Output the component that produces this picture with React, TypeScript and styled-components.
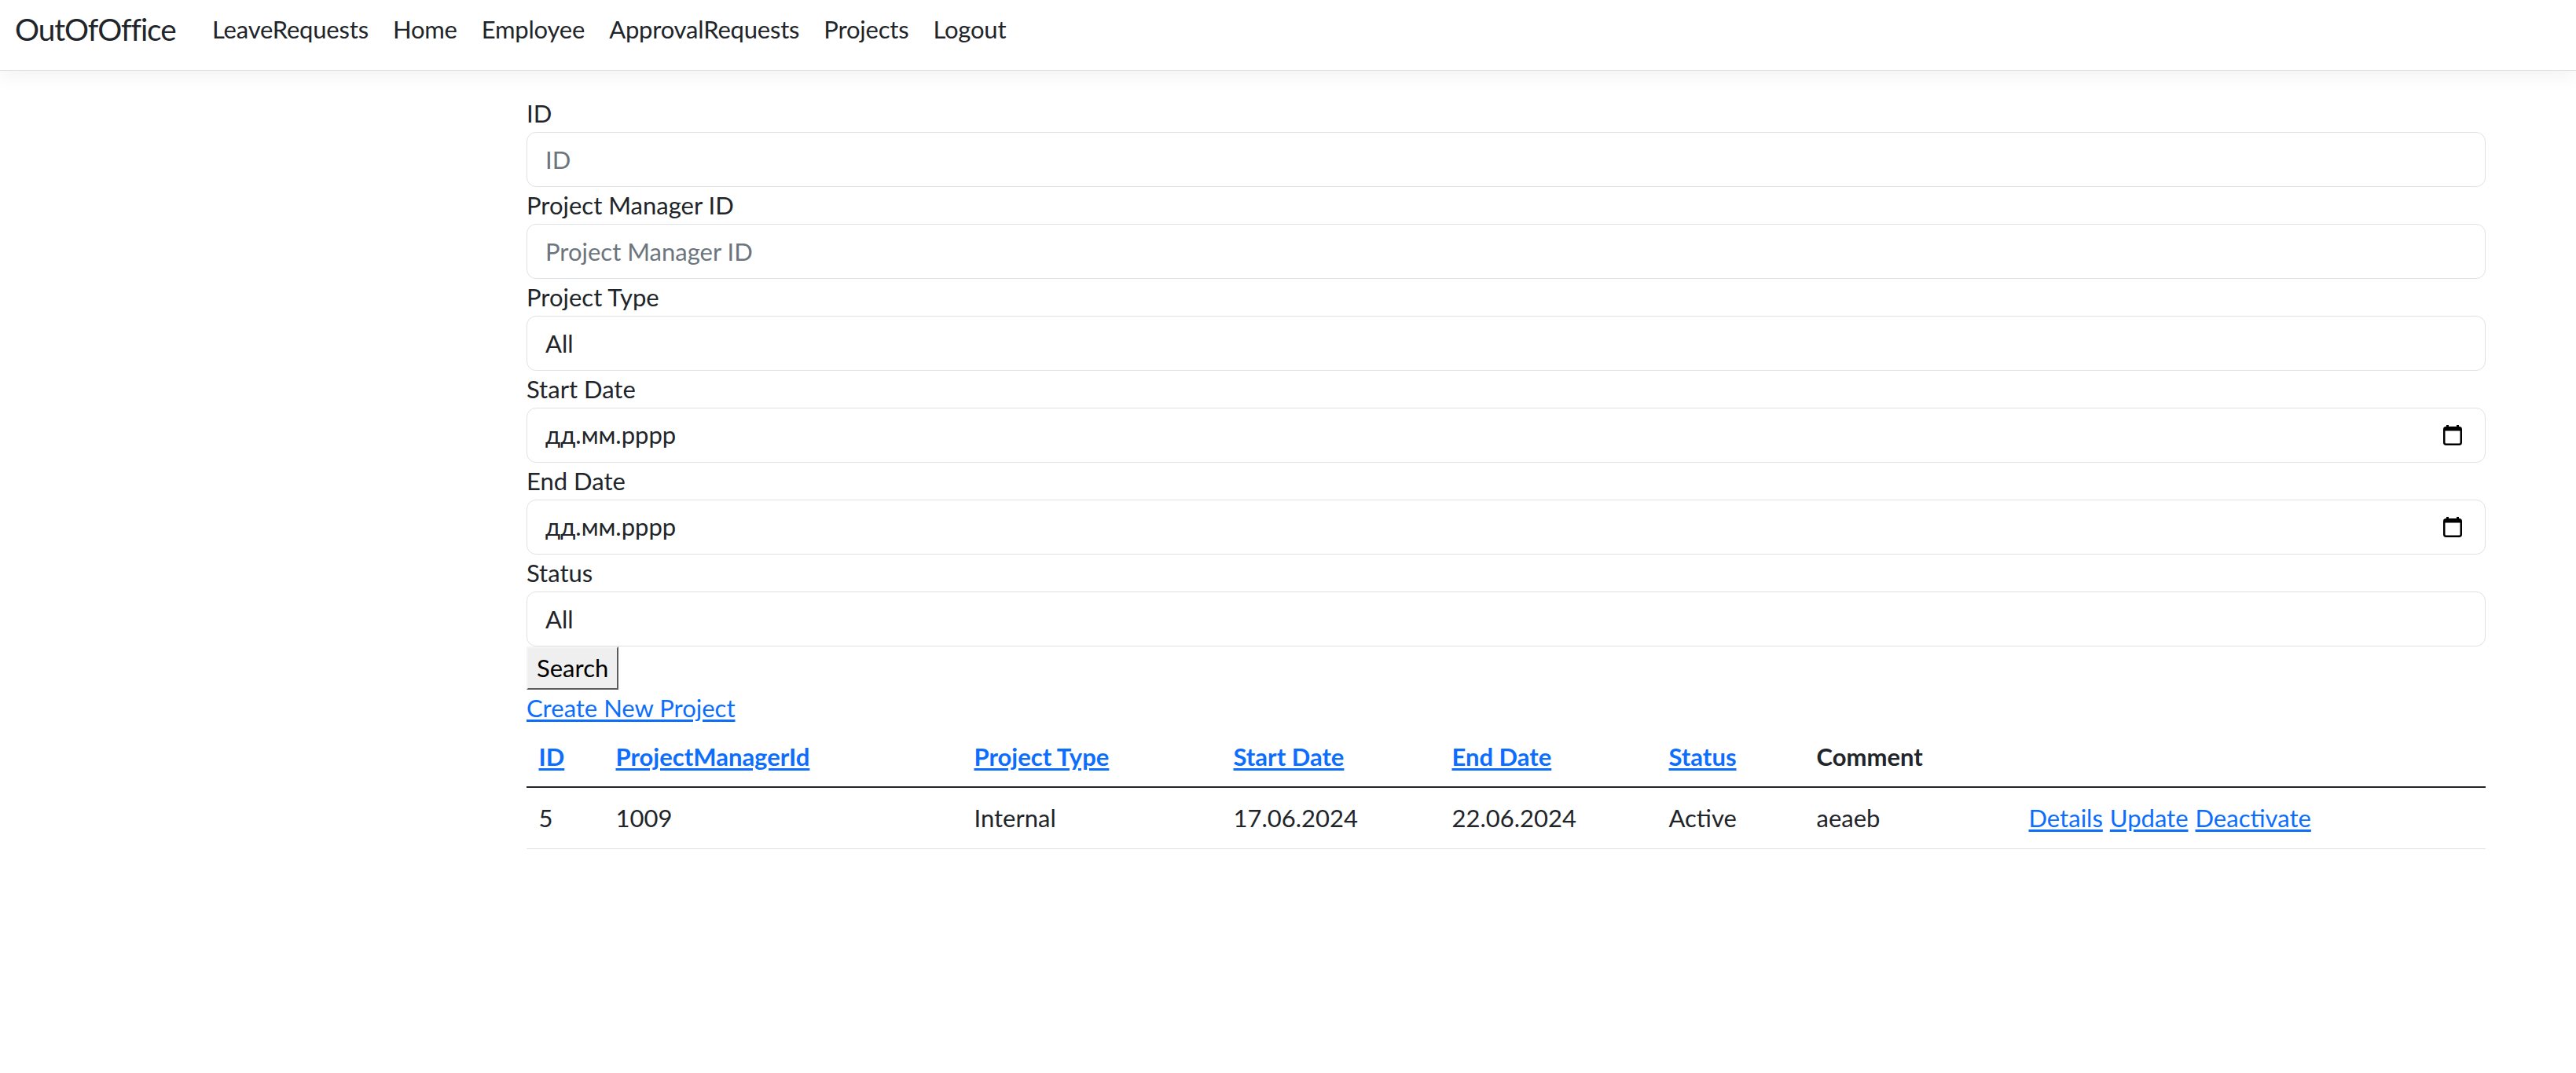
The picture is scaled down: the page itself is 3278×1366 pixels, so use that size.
import React from "react";
import styled, { createGlobalStyle } from "styled-components";

const GlobalStyle = createGlobalStyle`
  * { box-sizing: border-box; }
  html, body { margin: 0; padding: 0; background: #fff; }
  body {
    font-family: Lato, "Liberation Sans", sans-serif;
    font-size: 31px;
    line-height: 1.5;
    color: #212529;
  }
`;

const Header = styled.header`
  height: 90px;
  display: flex;
  align-items: center;
  padding: 0 20px 14px 19px;
  border-bottom: 1px solid #dcdcdc;
  box-shadow: 0 8px 23px rgba(0, 0, 0, 0.05);
  margin-bottom: 31px;
`;

const Brand = styled.a`
  font-size: 38.75px;
  letter-spacing: -1.1px;
  color: #212529;
  text-decoration: none;
  margin-right: 31px;
  line-height: 1.5;
`;

const NavList = styled.nav`
  display: flex;
  align-items: center;
`;

const NavLink = styled.a`
  padding: 0 15.5px;
  color: #212529;
  letter-spacing: -0.2px;
  text-decoration: none;
  white-space: nowrap;
`;

const Main = styled.main`
  padding: 0 115px 40px 670px;
`;

const Form = styled.form`
  display: flex;
  flex-direction: column;
  align-items: flex-start;
`;

const Field = styled.div`
  width: 100%;
  display: flex;
  flex-direction: column;
`;

const Label = styled.label`
  display: block;
  line-height: 46.5px;
`;

const controlBase = `
  width: 100%;
  height: 70.5px;
  padding: 0 23px;
  font-family: inherit;
  font-size: 31px;
  color: #212529;
  background: #fff;
  border: 1px solid #dee2e6;
  border-radius: 12px;
  outline: none;
`;

const Input = styled.input`
  ${controlBase}
  &::placeholder { color: #6c757d; opacity: 1; }
`;

const Select = styled.select`
  ${controlBase}
  appearance: none;
  -webkit-appearance: none;
`;

const DateBox = styled.div`
  ${controlBase}
  display: flex;
  align-items: center;
  justify-content: space-between;
  padding-right: 29px;
`;

const DateText = styled.span`
  line-height: 1;
`;

const SearchButton = styled.button`
  font-family: inherit;
  font-size: 31px;
  line-height: 46.5px;
  color: #000;
  background: #efefef;
  border: 2px outset #b0b0b0;
  border-top-color: #f4f4f4;
  border-left-color: #f4f4f4;
  padding: 0 11px;
  height: 55px;
  margin: 0;
`;

const Link = styled.a`
  color: #0d6efd;
  text-decoration: underline;
  text-underline-offset: 3px;
`;

const Table = styled.table`
  width: 100%;
  border-collapse: collapse;
  table-layout: fixed;
`;

const Th = styled.th`
  text-align: left;
  font-weight: 700;
  padding: 15px 15.5px;
  line-height: 46.5px;
  border-bottom: 2px solid #212529;
  white-space: nowrap;
`;

const Td = styled.td`
  padding: 15px 15.5px;
  line-height: 46.5px;
  border-bottom: 1px solid #dee2e6;
  white-space: nowrap;
`;

const Actions = styled.span`
  display: inline-flex;
  gap: 9px;
`;

const CalendarIcon = () => (
  <svg width="24" height="26" viewBox="0 0 24 26" aria-hidden="true">
    <rect x="4" y="0" width="3" height="4" fill="#000" />
    <rect x="17" y="0" width="3" height="4" fill="#000" />
    <rect x="1.25" y="3.25" width="21.5" height="21.5" rx="2.5" fill="none" stroke="#000" strokeWidth="2.5" />
    <rect x="1.5" y="3" width="21" height="4.5" fill="#000" />
  </svg>
);

const columns = [
  { w: 98, label: "ID", link: true },
  { w: 456, label: "ProjectManagerId", link: true },
  { w: 330, label: "Project Type", link: true },
  { w: 278, label: "Start Date", link: true },
  { w: 276, label: "End Date", link: true },
  { w: 188, label: "Status", link: true },
  { w: 270, label: "Comment", link: false },
  { w: undefined, label: "", link: false },
];

export default function App() {
  return (
    <>
      <GlobalStyle />
      <Header>
        <Brand href="#">OutOfOffice</Brand>
        <NavList>
          {["LeaveRequests", "Home", "Employee", "ApprovalRequests", "Projects", "Logout"].map((t) => (
            <NavLink key={t} href="#">{t}</NavLink>
          ))}
        </NavList>
      </Header>
      <Main>
        <Form onSubmit={(e) => e.preventDefault()}>
          <Field>
            <Label>ID</Label>
            <Input placeholder="ID" />
          </Field>
          <Field>
            <Label>Project Manager ID</Label>
            <Input placeholder="Project Manager ID" />
          </Field>
          <Field>
            <Label>Project Type</Label>
            <Select defaultValue="All">
              <option>All</option>
              <option>Internal</option>
              <option>External</option>
            </Select>
          </Field>
          <Field>
            <Label>Start Date</Label>
            <DateBox>
              <DateText>дд.мм.рррр</DateText>
              <CalendarIcon />
            </DateBox>
          </Field>
          <Field>
            <Label>End Date</Label>
            <DateBox>
              <DateText>дд.мм.рррр</DateText>
              <CalendarIcon />
            </DateBox>
          </Field>
          <Field>
            <Label>Status</Label>
            <Select defaultValue="All">
              <option>All</option>
              <option>Active</option>
              <option>Inactive</option>
            </Select>
          </Field>
          <SearchButton type="submit">Search</SearchButton>
        </Form>
        <div>
          <Link href="#">Create New Project</Link>
        </div>
        <Table>
          <colgroup>
            {columns.map((c, i) => (
              <col key={i} style={c.w ? { width: c.w } : undefined} />
            ))}
          </colgroup>
          <thead>
            <tr>
              {columns.map((c, i) => (
                <Th key={i}>{c.link ? <Link href="#">{c.label}</Link> : c.label}</Th>
              ))}
            </tr>
          </thead>
          <tbody>
            <tr>
              <Td>5</Td>
              <Td>1009</Td>
              <Td>Internal</Td>
              <Td>17.06.2024</Td>
              <Td>22.06.2024</Td>
              <Td>Active</Td>
              <Td>aeaeb</Td>
              <Td>
                <Actions>
                  <Link href="#">Details</Link>
                  <Link href="#">Update</Link>
                  <Link href="#">Deactivate</Link>
                </Actions>
              </Td>
            </tr>
          </tbody>
        </Table>
      </Main>
    </>
  );
}
